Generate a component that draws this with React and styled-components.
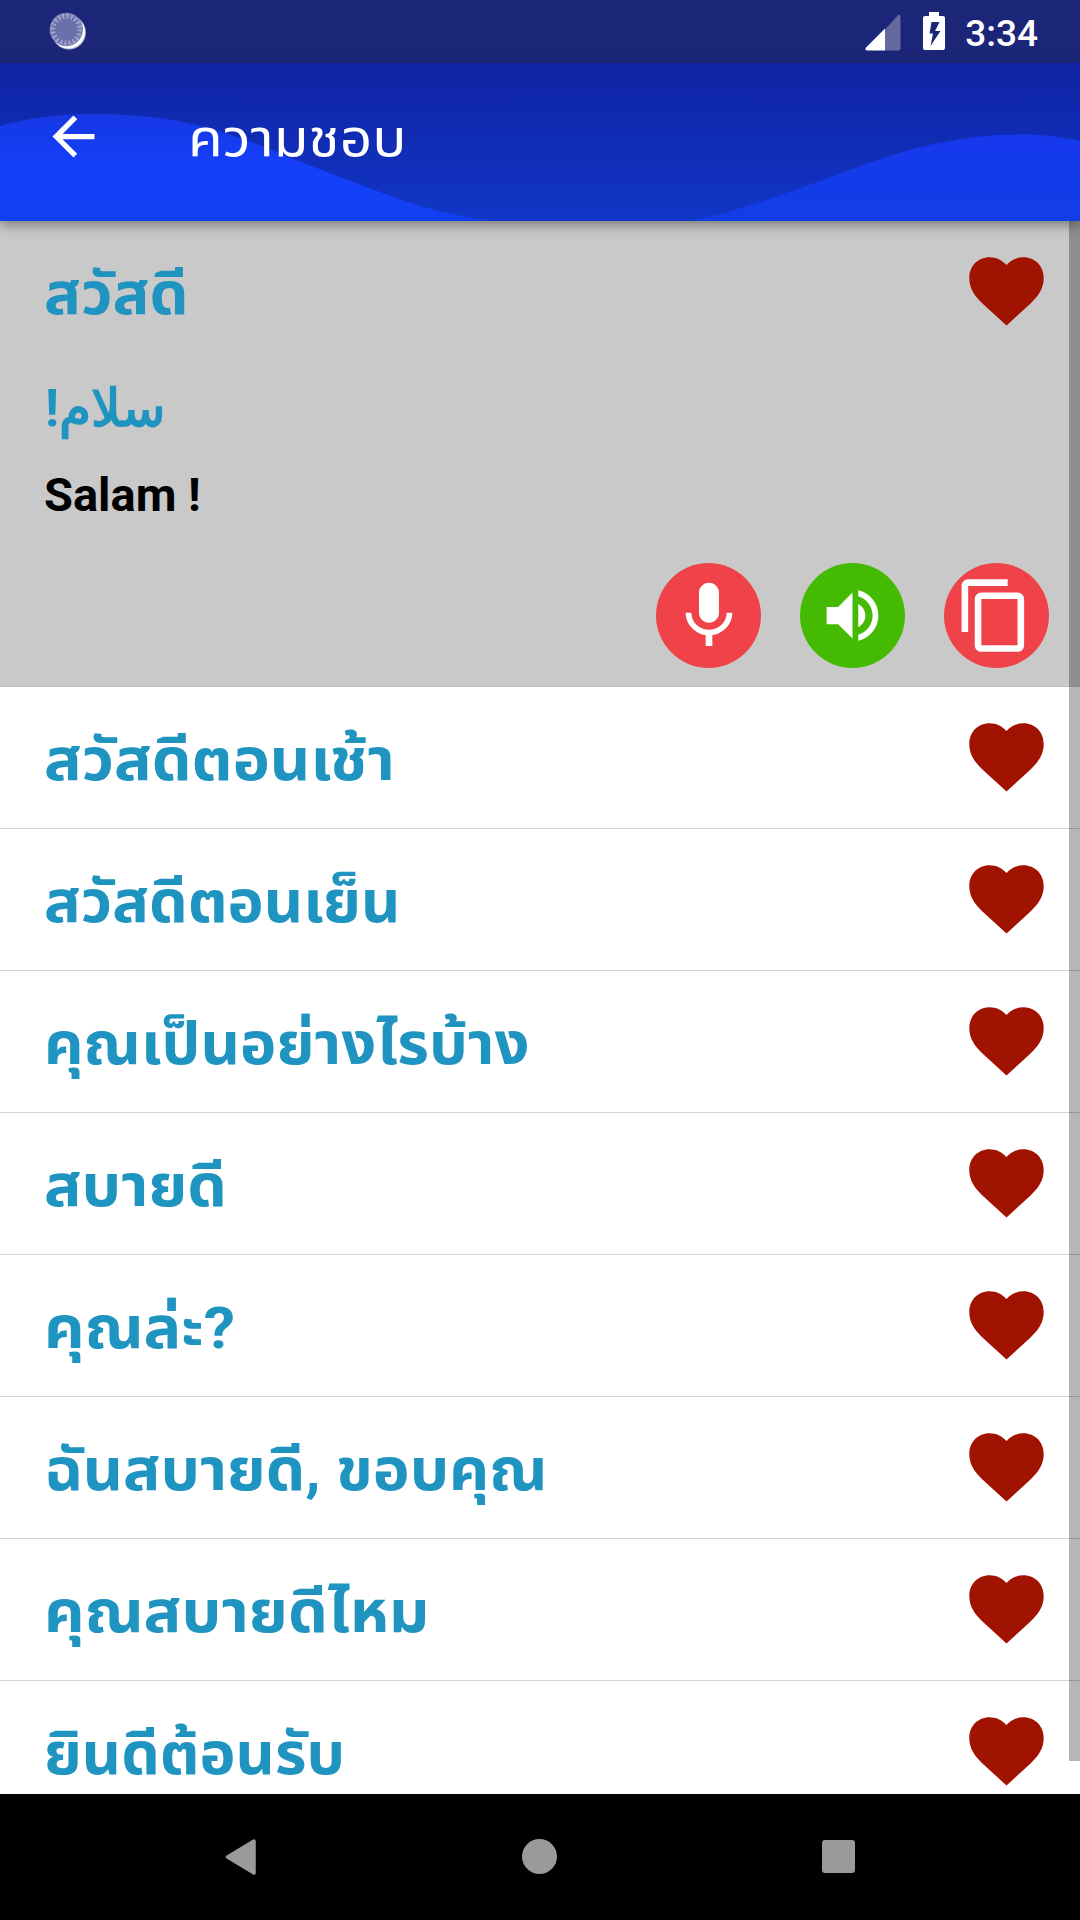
import React, { useState } from 'react';
import styled, { createGlobalStyle } from 'styled-components';

const phrases = [
  { id: 1, text: 'สวัสดี', stretch: 1.06, translation: 'سلام!', reading: 'Salam !' },
  { id: 2, text: 'สวัสดีตอนเช้า', stretch: 1.082 },
  { id: 3, text: 'สวัสดีตอนเย็น', stretch: 1.053 },
  { id: 4, text: 'คุณเป็นอย่างไรบ้าง', stretch: 1.057 },
  { id: 5, text: 'สบายดี', stretch: 1.077 },
  { id: 6, text: 'คุณล่ะ?', stretch: 1.085 },
  { id: 7, text: 'ฉันสบายดี, ขอบคุณ', stretch: 1.073 },
  { id: 8, text: 'คุณสบายดีไหม', stretch: 1.085 },
  { id: 9, text: 'ยินดีต้อนรับ', stretch: 1.049 },
];

const SyncIcon = () => (
  <svg width="40" height="42" viewBox="0 0 40 42">
    <circle cx="20" cy="20.500" r="17" fill="#a7aacb" />
    <circle cx="19.500" cy="20" r="16.500" fill="#fff" />
    <circle cx="17.300" cy="17.500" r="16.700" fill="#7b7fb3" />
    <circle cx="17.300" cy="17.500" r="13.500" fill="#6b70ab" />
    <circle cx="17.300" cy="17.500" r="13.500" fill="none" stroke="#a3a6cd" strokeWidth="5" strokeDasharray="1.7 2.541" />
  </svg>
);

const SignalIcon = () => (
  <svg width="36" height="37" viewBox="0 0 36 37">
    <path d="M20 15.5L33 1.2Q35.5 0 35.5 2.5V34.5Q35.5 36.5 33.5 36.5H20z" fill="#646a9f" />
    <path d="M20 14.5V36.5H2Q-.6 36 1 33.5z" fill="#fff" />
  </svg>
);

const BatteryIcon = () => (
  <svg width="22" height="38" viewBox="0 0 22 38">
    <path
      fillRule="evenodd"
      fill="#fff"
      d="M6 0h10v4h4q2 0 2 2v30q0 2-2 2H2q-2 0-2-2V6q0-2 2-2h4zM8.5 10L6.5 21.5h3.5L7.5 34 17.5 19h-5.500L16.500 10z"
    />
  </svg>
);

const HeartIcon = () => (
  <svg width="75" height="69" viewBox="0 0 75 69">
    <path
      fill="#a01300"
      d="M37.500 68.500L14 47C5 38.500 .3 31 .3 21C.3 9 9 .3 20.500 .3C27 .3 33 3 37.500 8C42 3 48 .3 54.500 .3C66 .3 74.700 9 74.700 21C74.700 31 70 38.500 61 47z"
    />
  </svg>
);

const icons = {
  back: 'M20 11H7.83l5.59-5.59L12 4l-8 8 8 8 1.41-1.41L7.83 13H20v-2z',
  mic: 'M12 14c1.66 0 2.99-1.34 2.99-3L15 5c0-1.66-1.34-3-3-3S9 3.34 9 5v6c0 1.66 1.34 3 3 3zm5.3-3c0 3-2.54 5.1-5.3 5.1S6.7 14 6.7 11H5c0 3.41 2.72 6.23 6 6.72V21h2v-3.28c3.28-.48 6-3.3 6-6.72h-1.7z',
  volume: 'M3 9v6h4l5 5V4L7 9H3zm13.5 3c0-1.77-1.02-3.29-2.500-4.030v8.050c1.480-.730 2.500-2.250 2.500-4.020zM14 3.230v2.060c2.890.860 5 3.540 5 6.710s-2.110 5.850-5 6.710v2.060c4.010-.910 7-4.490 7-8.770s-2.990-7.860-7-8.770z',
  copy: 'M16 1H4c-1.100 0-2 .900-2 2v14h2V3h12V1zm3 4H8c-1.100 0-2 .900-2 2v14c0 1.100.900 2 2 2h11c1.100 0 2-.900 2-2V7c0-1.100-.900-2-2-2zm0 16H8V7h11v14z',
};

const Icon = ({ name, size }) => (
  <svg width={size} height={size} viewBox="0 0 24 24">
    <path d={icons[name]} fill="#fff" />
  </svg>
);

const Waves = () => (
  <WaveSvg viewBox="0 0 1080 158" preserveAspectRatio="none">
    <defs>
      <linearGradient id="left" x1="0" y1="0" x2="0" y2="1">
        <stop offset="0" stopColor="#1638e4" />
        <stop offset=".55" stopColor="#1440fb" />
        <stop offset="1" stopColor="#1240f0" />
      </linearGradient>
      <linearGradient id="right" x1="0" y1="0" x2="0" y2="1">
        <stop offset="0" stopColor="#1638ee" />
        <stop offset="1" stopColor="#123ee6" />
      </linearGradient>
    </defs>
    <path d="M0 63C30 54 65 51 95 51C135 51 170 55 200 63C240 73 265 84 301 99C340 114 380 130 420 143C445 150 468 155 494 158H0z" fill="url(#left)" />
    <path d="M690 158C725 151 752 142 781 132C820 119 850 106 884 95C905 88 925 82 946 79C970 74 995 71.500 1022 71.500C1042 71.500 1062 74 1080 78V158z" fill="url(#right)" />
  </WaveSvg>
);

function Phrase({ item, open, onToggle }) {
  return (
    <Item $open={open}>
      <ItemHead onClick={onToggle}>
        <Thai $stretch={item.stretch}>{item.text}</Thai>
        <HeartIcon />
      </ItemHead>
      {open && item.translation && (
        <>
          <Translation lang="fa" dir="rtl">{item.translation}</Translation>
          <Reading>{item.reading}</Reading>
          <Actions>
            <RoundButton $color="#f04349"><Icon name="mic" size={80} /></RoundButton>
            <RoundButton $color="#45ba02"><Icon name="volume" size={69} /></RoundButton>
            <RoundButton $color="#f04349" $shift="5px"><Icon name="copy" size={79} /></RoundButton>
          </Actions>
        </>
      )}
    </Item>
  );
}

export default function App() {
  const [openId, setOpenId] = useState(1);

  return (
    <Screen>
      <GlobalStyle />
      <StatusBar>
        <SyncIcon />
        <StatusRight>
          <SignalIcon />
          <BatteryIcon />
          <Clock>3:34</Clock>
        </StatusRight>
      </StatusBar>
      <Header>
        <Waves />
        <BackButton><Icon name="back" size={63} /></BackButton>
        <Title>ความชอบ</Title>
      </Header>
      <List>
        {phrases.map((item) => (
          <Phrase
            key={item.id}
            item={item}
            open={item.id === openId}
            onToggle={() => setOpenId(item.id === openId ? null : item.id)}
          />
        ))}
        <ScrollThumb />
      </List>
      <NavBar>
        <NavSlot>
          <svg width="32" height="36" viewBox="0 0 32 36">
            <path d="M29 2L2.500 18 29 34z" fill="#9a9a9a" stroke="#9a9a9a" strokeWidth="3.500" strokeLinejoin="round" />
          </svg>
        </NavSlot>
        <NavSlot><HomeDot /></NavSlot>
        <NavSlot><RecentSquare /></NavSlot>
      </NavBar>
    </Screen>
  );
}

const GlobalStyle = createGlobalStyle`
  * {
    box-sizing: border-box;
  }
  body {
    margin: 0;
    background: #fff;
    font-family: Roboto, "Noto Sans Thai", "Noto Sans", sans-serif;
  }
  svg {
    display: block;
    flex: none;
  }
`;

const Screen = styled.div`
  display: flex;
  flex-direction: column;
  width: 1080px;
  height: 1920px;
  overflow: hidden;
`;

const StatusBar = styled.div`
  display: flex;
  justify-content: space-between;
  height: 63px;
  padding: 12px 42px 0 49px;
  background: #1b2678;
`;

const StatusRight = styled.div`
  display: flex;
  align-items: flex-start;
  gap: 22px;

  svg:first-child {
    margin-top: 2px;
  }
`;

const Clock = styled.span`
  margin-left: -2px;
  color: #fff;
  font-size: 37px;
  font-weight: 500;
  line-height: 43px;
`;

const Header = styled.header`
  position: relative;
  z-index: 1;
  display: flex;
  align-items: center;
  height: 158px;
  padding: 0 42px 11px;
  background: linear-gradient(#1023a4, #1136c6);
  box-shadow: 0 4px 12px rgba(0, 0, 0, 0.4);
`;

const WaveSvg = styled.svg`
  position: absolute;
  inset: 0;
  width: 100%;
  height: 100%;
`;

const BackButton = styled.button`
  position: relative;
  padding: 0;
  border: 0;
  background: none;
`;

const Title = styled.h1`
  position: relative;
  margin: 5px 0 0 83px;
  color: #fff;
  font-size: 52px;
  font-weight: 400;
  line-height: 60px;
  transform: scaleX(1.09);
  transform-origin: left;
`;

const List = styled.div`
  position: relative;
  flex: 1;
  overflow: hidden;
`;

const Item = styled.div`
  border-bottom: 1px solid ${(p) => (p.$open ? '#c0c0c0' : '#d3d3d3')};
  background: ${(p) => (p.$open ? '#c9c9c9' : '#fff')};
`;

const ItemHead = styled.div`
  display: flex;
  align-items: center;
  justify-content: space-between;
  height: 141px;
  padding: 0 36px 0 44px;
`;

const Thai = styled.span`
  padding-top: 4px;
  color: #2094c0;
  font-size: 58px;
  font-weight: 700;
  line-height: 80px;
  white-space: nowrap;
  transform: scaleX(${(p) => p.$stretch});
  transform-origin: left;
`;

const Translation = styled.div`
  height: 80px;
  margin-top: 7px;
  padding-left: 45px;
  color: #2094c0;
  font-size: 52px;
  font-weight: 700;
  line-height: 80px;
  text-align: left;
`;

const Reading = styled.div`
  height: 56px;
  margin-top: 18px;
  padding-left: 44px;
  color: #000;
  font-size: 47px;
  font-weight: 700;
  line-height: 56px;
`;

const Actions = styled.div`
  display: flex;
  justify-content: flex-end;
  gap: 39px;
  height: 163px;
  padding: 40px 31px 0 0;
`;

const RoundButton = styled.button`
  display: flex;
  align-items: center;
  justify-content: center;
  width: 105px;
  height: 105px;
  padding: 0 ${(p) => p.$shift || 0} 0 0;
  border: 0;
  border-radius: 50%;
  background: ${(p) => p.$color};
`;

/* sits over the rows, so it darkens the lines under it too */
const ScrollThumb = styled.div`
  position: absolute;
  top: 0;
  right: 0;
  width: 11px;
  height: 1540px;
  background: rgba(0, 0, 0, 0.285);
`;

const NavBar = styled.nav`
  display: flex;
  align-items: center;
  justify-content: center;
  height: 126px;
  padding: 0 1px 1px 0;
  background: #000;
`;

const NavSlot = styled.div`
  display: flex;
  justify-content: center;
  width: 298.5px;
`;

const HomeDot = styled.div`
  width: 35px;
  height: 35px;
  border-radius: 50%;
  background: #9a9a9a;
`;

const RecentSquare = styled.div`
  width: 33px;
  height: 33px;
  border-radius: 3px;
  background: #9a9a9a;
`;
